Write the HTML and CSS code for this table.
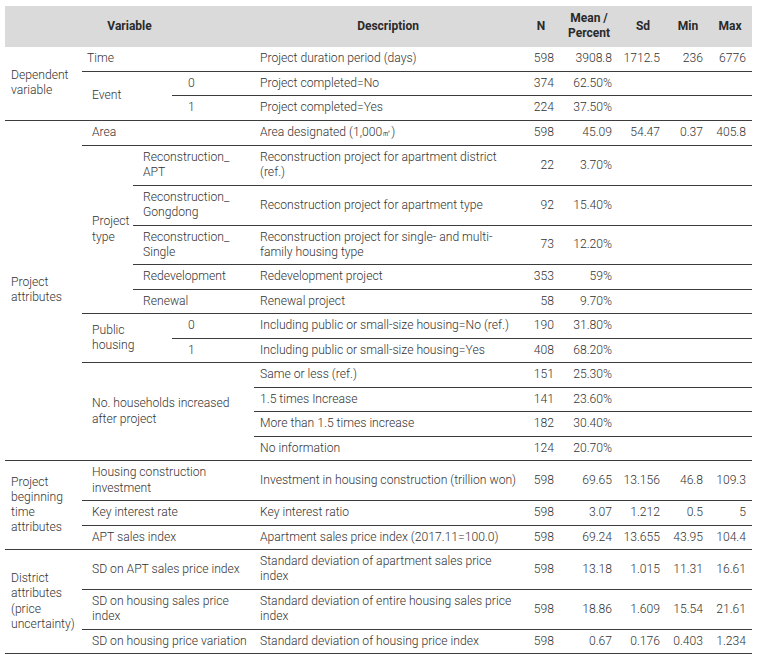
FILE: index.html
```html
<!DOCTYPE html>
<html lang="en">
<head>
<meta charset="utf-8">
<title>Descriptive statistics</title>
<link rel="stylesheet" href="styles.css">
</head>
<body>
<div class="wrap">
<table class="stats">
  <colgroup>
    <col class="c-grp">
    <col class="c-v1">
    <col class="c-v2">
    <col class="c-v3">
    <col class="c-desc">
    <col class="c-n">
    <col class="c-mean">
    <col class="c-sd">
    <col class="c-min">
    <col class="c-max">
  </colgroup>
  <thead>
    <tr>
      <th colspan="4">Variable</th>
      <th>Description</th>
      <th>N</th>
      <th>Mean /<br>Percent</th>
      <th>Sd</th>
      <th>Min</th>
      <th>Max</th>
    </tr>
  </thead>
  <tbody>
    <tr>
      <td class="grp" rowspan="3">Dependent variable</td>
      <td class="var time" colspan="3">Time</td>
      <td class="desc">Project duration period (days)</td>
      <td class="n">598</td><td class="mean">3908.8</td><td class="sd">1712.5</td><td class="min">236</td><td class="max">6776</td>
    </tr>
    <tr>
      <td class="var" colspan="2" rowspan="2">Event</td>
      <td class="lvl">0</td>
      <td class="desc">Project completed=No</td>
      <td class="n">374</td><td class="mean">62.50%</td><td class="sd"></td><td class="min"></td><td class="max"></td>
    </tr>
    <tr class="gend">
      <td class="lvl">1</td>
      <td class="desc">Project completed=Yes</td>
      <td class="n">224</td><td class="mean">37.50%</td><td class="sd"></td><td class="min"></td><td class="max"></td>
    </tr>

    <tr>
      <td class="grp" rowspan="12">Project attributes</td>
      <td class="var" colspan="3">Area</td>
      <td class="desc">Area designated (1,000<span class="unit">㎡</span>)</td>
      <td class="n">598</td><td class="mean">45.09</td><td class="sd">54.47</td><td class="min">0.37</td><td class="max">405.8</td>
    </tr>
    <tr>
      <td class="var ptype" rowspan="5">Project type</td>
      <td class="var" colspan="2">Reconstruction_<br>APT</td>
      <td class="desc">Reconstruction project for apartment district (ref.)</td>
      <td class="n">22</td><td class="mean">3.70%</td><td class="sd"></td><td class="min"></td><td class="max"></td>
    </tr>
    <tr>
      <td class="var" colspan="2">Reconstruction_<br>Gongdong</td>
      <td class="desc">Reconstruction project for apartment type</td>
      <td class="n">92</td><td class="mean">15.40%</td><td class="sd"></td><td class="min"></td><td class="max"></td>
    </tr>
    <tr>
      <td class="var" colspan="2">Reconstruction_<br>Single</td>
      <td class="desc">Reconstruction project for single- and multi-family housing type</td>
      <td class="n">73</td><td class="mean">12.20%</td><td class="sd"></td><td class="min"></td><td class="max"></td>
    </tr>
    <tr>
      <td class="var" colspan="2">Redevelopment</td>
      <td class="desc">Redevelopment project</td>
      <td class="n">353</td><td class="mean">59%</td><td class="sd"></td><td class="min"></td><td class="max"></td>
    </tr>
    <tr>
      <td class="var" colspan="2">Renewal</td>
      <td class="desc">Renewal project</td>
      <td class="n">58</td><td class="mean">9.70%</td><td class="sd"></td><td class="min"></td><td class="max"></td>
    </tr>
    <tr>
      <td class="var" colspan="2" rowspan="2">Public housing</td>
      <td class="lvl">0</td>
      <td class="desc">Including public or small-size housing=No (ref.)</td>
      <td class="n">190</td><td class="mean">31.80%</td><td class="sd"></td><td class="min"></td><td class="max"></td>
    </tr>
    <tr>
      <td class="lvl">1</td>
      <td class="desc">Including public or small-size housing=Yes</td>
      <td class="n">408</td><td class="mean">68.20%</td><td class="sd"></td><td class="min"></td><td class="max"></td>
    </tr>
    <tr>
      <td class="var" colspan="3" rowspan="4">No. households increased after project</td>
      <td class="desc">Same or less (ref.)</td>
      <td class="n">151</td><td class="mean">25.30%</td><td class="sd"></td><td class="min"></td><td class="max"></td>
    </tr>
    <tr>
      <td class="desc">1.5 times Increase</td>
      <td class="n">141</td><td class="mean">23.60%</td><td class="sd"></td><td class="min"></td><td class="max"></td>
    </tr>
    <tr>
      <td class="desc">More than 1.5 times increase</td>
      <td class="n">182</td><td class="mean">30.40%</td><td class="sd"></td><td class="min"></td><td class="max"></td>
    </tr>
    <tr>
      <td class="desc">No information</td>
      <td class="n">124</td><td class="mean">20.70%</td><td class="sd"></td><td class="min"></td><td class="max"></td>
    </tr>

    <tr>
      <td class="grp" rowspan="3">Project beginning time attributes</td>
      <td class="var" colspan="3">Housing construction investment</td>
      <td class="desc">Investment in housing construction (trillion won)</td>
      <td class="n">598</td><td class="mean">69.65</td><td class="sd">13.156</td><td class="min">46.8</td><td class="max">109.3</td>
    </tr>
    <tr>
      <td class="var" colspan="3">Key interest rate</td>
      <td class="desc">Key interest ratio</td>
      <td class="n">598</td><td class="mean">3.07</td><td class="sd">1.212</td><td class="min">0.5</td><td class="max">5</td>
    </tr>
    <tr>
      <td class="var" colspan="3">APT sales index</td>
      <td class="desc">Apartment sales price index (2017.11=100.0)</td>
      <td class="n">598</td><td class="mean">69.24</td><td class="sd">13.655</td><td class="min">43.95</td><td class="max">104.4</td>
    </tr>

    <tr>
      <td class="grp" rowspan="3">District attributes (price uncertainty)</td>
      <td class="var" colspan="3">SD on APT sales price index</td>
      <td class="desc">Standard deviation of apartment sales price index</td>
      <td class="n">598</td><td class="mean">13.18</td><td class="sd">1.015</td><td class="min">11.31</td><td class="max">16.61</td>
    </tr>
    <tr>
      <td class="var" colspan="3">SD on housing sales price index</td>
      <td class="desc">Standard deviation of entire housing sales price index</td>
      <td class="n">598</td><td class="mean">18.86</td><td class="sd">1.609</td><td class="min">15.54</td><td class="max">21.61</td>
    </tr>
    <tr>
      <td class="var" colspan="3">SD on housing price variation</td>
      <td class="desc">Standard deviation of housing price index</td>
      <td class="n">598</td><td class="mean">0.67</td><td class="sd">0.176</td><td class="min">0.403</td><td class="max">1.234</td>
    </tr>
  </tbody>
</table>
</div>
</body>
</html>
```
FILE: styles.css
```css
html, body {
  margin: 0;
  padding: 0;
  background: #ffffff;
}

.wrap {
  padding: 6px 7px 0 5px;
}

.stats {
  width: 747px;
  table-layout: fixed;
  border-collapse: collapse;
  font-family: Roboto, "Liberation Sans", sans-serif;
  font-weight: 300;
  font-size: 12.15px;
  line-height: 15.3px;
  color: #333333;
}

.c-grp { width: 77px; }
.c-v1 { width: 51px; }
.c-v2 { width: 39px; }
.c-v3 { width: 82px; }
.c-desc { width: 268px; }
.c-n { width: 38px; }
.c-mean { width: 58px; }
.c-sd { width: 50px; }
.c-min { width: 40px; }
.c-max { width: 44px; }

.stats th {
  background: #dadada;
  font-weight: 700;
  font-size: 12px;
  color: #2a2a2a;
  padding: 5px 0 5.5px;
  text-align: center;
  vertical-align: middle;
}

.stats td {
  padding: 4.1px 0;
  border-bottom: 1px solid #3c3c3c;
  vertical-align: middle;
  text-align: left;
}

.stats td.grp {
  padding-left: 6px;
  padding-right: 4px;
}

.stats td.var {
  padding-left: 10px;
  padding-right: 6px;
}

.stats td.time {
  padding-left: 5px;
}

.stats td.ptype {
  padding-right: 0;
}

.stats td.lvl {
  padding-left: 16px;
}

.stats td.desc {
  padding-left: 6px;
  padding-right: 3px;
}

.stats td.n,
.stats td.mean,
.stats td.sd,
.stats td.min,
.stats td.max {
  text-align: right;
}

.stats td.n { padding-right: 6px; }
.stats td.mean { padding-right: 6px; }
.stats td.sd { padding-right: 8px; }
.stats td.min { padding-right: 5px; }
.stats td.max { padding-right: 6px; }

.unit {
  font-size: 9px;
}
```
